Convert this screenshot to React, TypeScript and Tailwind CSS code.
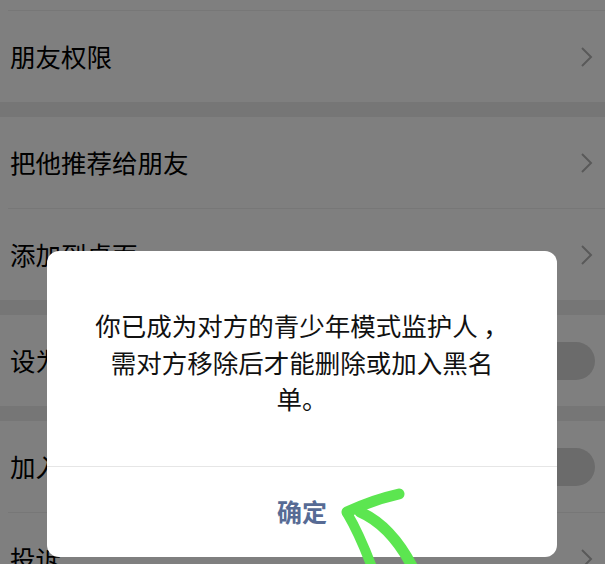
import React from 'react';

// 资料设置页（被弹窗遮住的背景）
type Row = { label: string; kind: 'arrow' | 'switch' };

const groups: Row[][] = [
  [{ label: '朋友权限', kind: 'arrow' }],
  [
    { label: '把他推荐给朋友', kind: 'arrow' },
    { label: '添加到桌面', kind: 'arrow' },
  ],
  [{ label: '设为星标朋友', kind: 'switch' }],
  [
    { label: '加入黑名单', kind: 'switch' },
    { label: '投诉', kind: 'arrow' },
  ],
];

function Chevron() {
  return (
    <svg width="14" height="22" viewBox="0 0 14 22" className="mr-[11px]">
      <polyline points="2,2 11,11 2,20" fill="none" stroke="#b3b3b3" strokeWidth="2" />
    </svg>
  );
}

function Switch() {
  return <div className="mr-[10px] h-[38px] w-[64px] rounded-full bg-[#d6d6d6]" />;
}

function SettingRow({ row }: { row: Row }) {
  return (
    <div className="flex h-[91px] items-center justify-between bg-white pl-[10px]">
      <span className="text-[25.5px] text-black">{row.label}</span>
      {row.kind === 'arrow' ? <Chevron /> : <Switch />}
    </div>
  );
}

export default function App() {
  return (
    <div
      className="relative h-[564px] w-full overflow-hidden bg-[#ededed]"
      style={{ fontFamily: '"Noto Sans CJK SC", "Noto Sans", sans-serif' }}
    >
      {/* 背景列表 */}
      <div className="flex flex-col">
        <div className="h-[10px] bg-white" />
        <div className="bg-white pl-[8px]">
          <div className="h-px bg-[#efefef]" />
        </div>
        {groups.map((group, gi) => (
          <div key={gi} className={gi === 0 ? '' : 'mt-[15px]'}>
            {group.map((row, ri) => (
              <div key={row.label}>
                {ri > 0 && (
                  <div className="bg-white pl-[8px]">
                    <div className="h-px bg-[#efefef]" />
                  </div>
                )}
                <SettingRow row={row} />
              </div>
            ))}
          </div>
        ))}
      </div>

      {/* 遮罩 */}
      <div className="absolute inset-0 bg-black/50" />

      {/* 弹窗 */}
      <div className="absolute left-[47px] top-[251px] flex h-[306px] w-[510px] flex-col overflow-hidden rounded-[12px] bg-white">
        <div className="flex h-[215px] justify-center pt-[56px]">
          <p className="text-center text-[25.5px] leading-[36.5px] text-[#111]">
            你已成为对方的青少年模式监护人 ，
            <br />
            需对方移除后才能删除或加入黑名
            <br />
            单。
          </p>
        </div>
        <div className="h-px bg-[#e6e6e6]" />
        <div className="flex flex-1 items-center justify-center">
          <span className="text-[25px] font-bold text-[#576b95]">确定</span>
        </div>
      </div>

      {/* 手绘箭头 */}
      <svg className="absolute inset-0" width="605" height="564" viewBox="0 0 605 564">
        <g fill="none" stroke="#5ce650" strokeLinecap="round" strokeLinejoin="round">
          <path d="M399 494 Q372 500 347 512" strokeWidth="11" />
          <path d="M347 513 Q360 535 373 570" strokeWidth="10" />
          <path d="M360 512 Q392 526 414 570" strokeWidth="11" />
        </g>
      </svg>
    </div>
  );
}
